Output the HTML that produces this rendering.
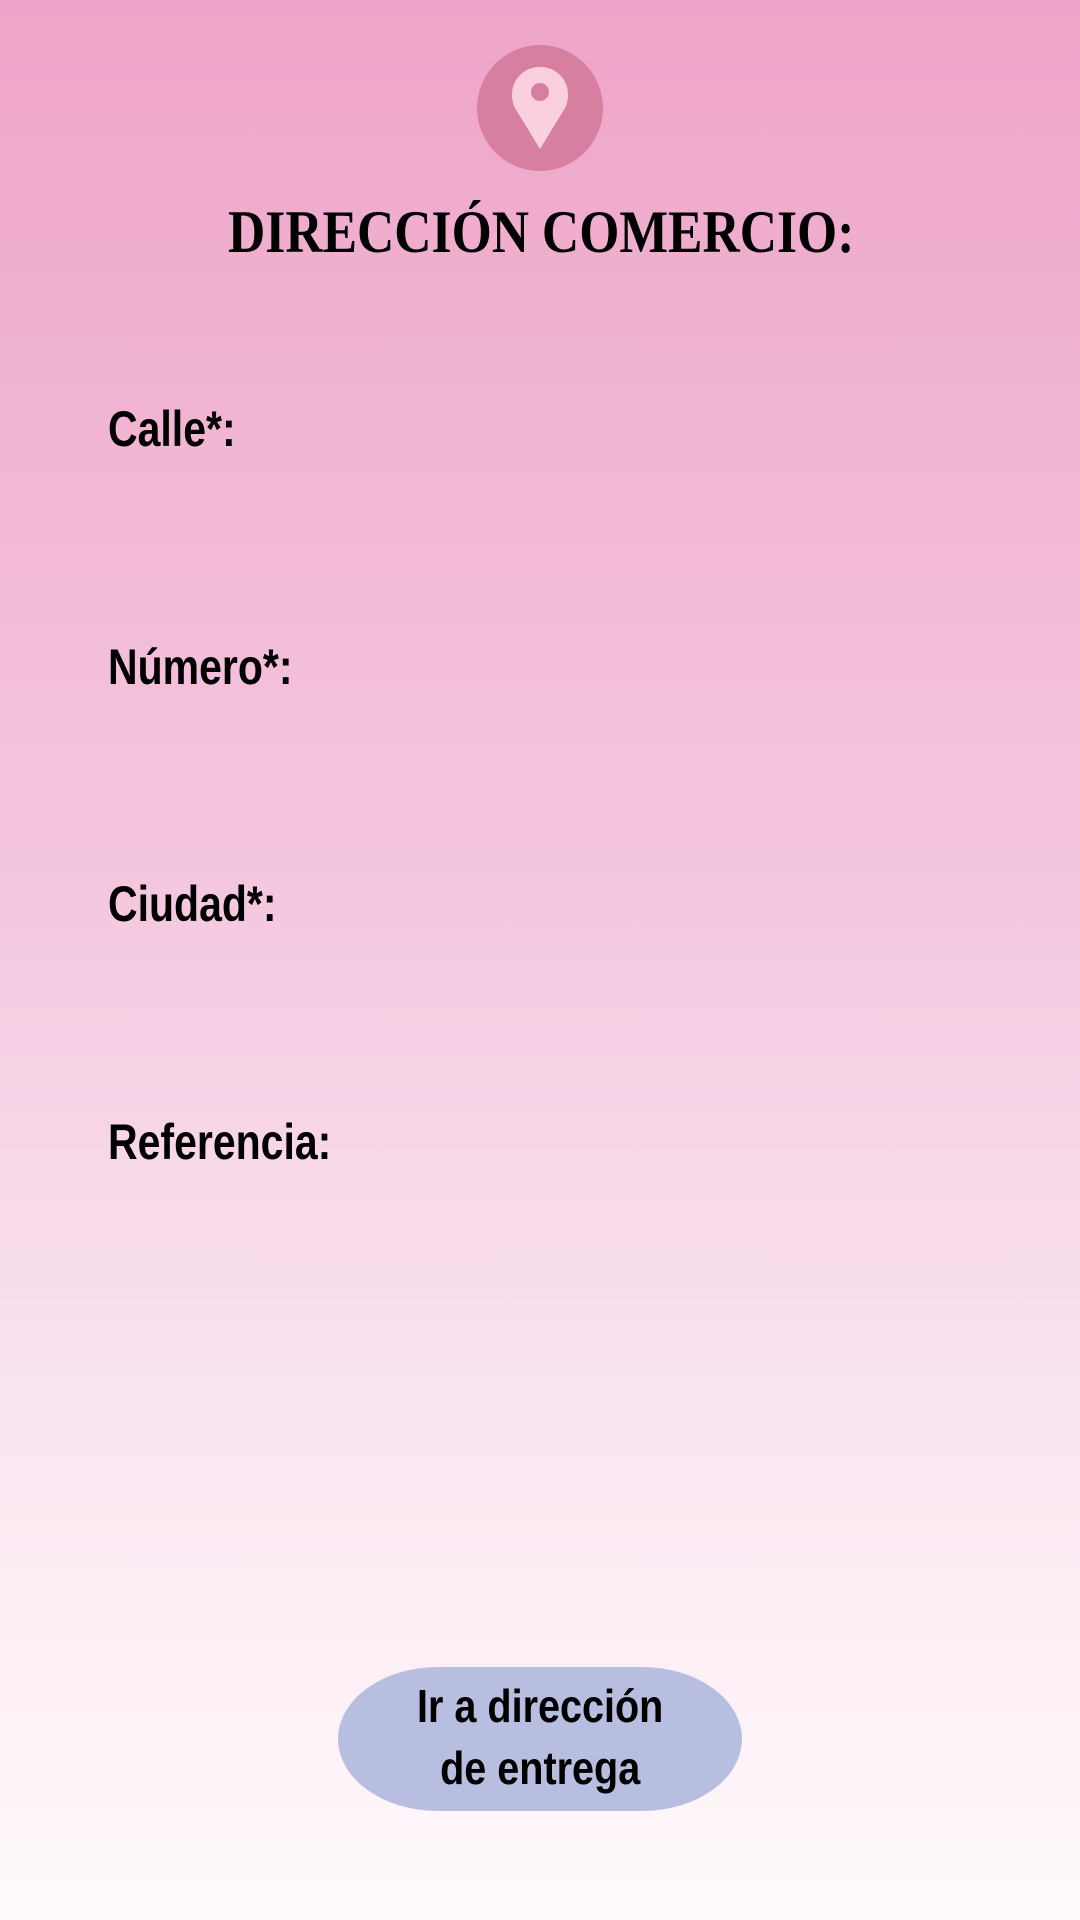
<!DOCTYPE html>
<html><head><meta charset="utf-8"><style>
html,body{margin:0;padding:0}
body{width:1080px;height:1920px;position:relative;overflow:hidden;background:linear-gradient(to bottom,#eea4c8 0%,#f4c6de 45%,#f9e2ee 70%,#fffafc 100%);font-family:"Liberation Sans",sans-serif;color:#000}
.t{position:absolute;white-space:nowrap;font-weight:bold;transform-origin:left top}
.lab{left:108px;font-size:50px;transform:scaleX(0.82)}
.title{left:228px;top:198px;font-size:60px;font-family:"Liberation Serif",serif;transform:scaleX(0.86)}
.btn{position:absolute;left:338px;top:1667px;width:404px;height:144px;border-radius:100px/72px;background:#b8bedf;text-align:center}
.btn span{display:inline-block;font-weight:bold;font-size:46px;line-height:62px;margin-top:8px;transform:scaleX(0.86)}
</style></head><body>
<svg style="position:absolute;left:477px;top:45px" width="126" height="126" viewBox="0 0 126 126">
<circle cx="63" cy="63" r="63" fill="#d67fa1"/>
<path d="M63 22c-16 0-28 12-28 28 0 5 1 9 3 13l25 41 25-41c2-4 3-8 3-13 0-16-12-28-28-28z" fill="#fad0df"/>
<circle cx="63" cy="47" r="9" fill="#d67fa1"/>
</svg>
<div class="t title">DIRECCIÓN COMERCIO:</div>
<div class="t lab" style="top:400px">Calle*:</div>
<div class="t lab" style="top:638px">Número*:</div>
<div class="t lab" style="top:875px">Ciudad*:</div>
<div class="t lab" style="top:1113px">Referencia:</div>
<div class="btn"><span>Ir a dirección<br>de entrega</span></div>
</body></html>
